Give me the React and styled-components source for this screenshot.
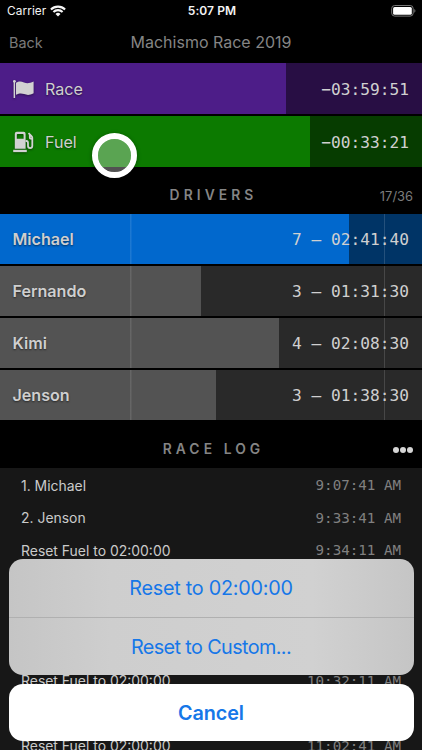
import React from 'react';
import styled, { createGlobalStyle } from 'styled-components';

const GlobalStyle = createGlobalStyle`
    * {
        box-sizing: border-box;
    }

    body {
        margin: 0;
        background: #000;
        overflow: hidden;
        font-family: Inter, Roboto, sans-serif;
    }
`;

const Screen = styled.div`
    position: relative;
    width: 422px;
    height: 750px;
    overflow: hidden;
    background: #000;
`;

//STATUS BAR + NAVIGATION
const StatusBar = styled.div`
    display: grid;
    grid-template-columns: 1fr auto 1fr;
    align-items: center;
    height: 22px;
    padding: 0 6px 0 7px;
    color: #f4f4f4;
    font-size: 11.8px;
    line-height: 22px;
`;

const Carrier = styled.div`
    display: flex;
    align-items: center;
    gap: 4px;
    letter-spacing: 0.1px;
`;

const Clock = styled.div`
    font-weight: 600;
    font-size: 12px;
    letter-spacing: 0.1px;
    margin-right: -1px;
`;

const Battery = styled.svg`
    display: block;
    justify-self: end;
`;

const NavBar = styled.div`
    display: grid;
    grid-template-columns: 1fr auto 1fr;
    align-items: center;
    height: 41px;
    padding: 0 9px;
    color: #858585;
    line-height: 40px;
`;

const BackButton = styled.div`
    font-size: 14.4px;
    color: #7a7a7a;
`;

const Title = styled.div`
    font-size: 16px;
    line-height: 38px;
    padding-bottom: 2px;
`;

//BARS
const BarList = styled.div`
    display: flex;
    flex-direction: column;
    gap: 2px;
`;

const Bar = styled.div`
    display: flex;
    align-items: center;
    justify-content: space-between;
    height: ${props => props.$height || '50px'};
    padding: 0 13px 0 12.5px;
    background:
        ${props => props.$marks ? 'linear-gradient(#ffffff1c, #ffffff1c) 130px 0 / 1.5px 100% no-repeat, linear-gradient(#ffffff24, #ffffff24) 384px 0 / 1px 100% no-repeat,' : ''}
        linear-gradient(${props => props.$fill}, ${props => props.$fill}) 0 0 / ${props => props.$progress}px 100% no-repeat,
        ${props => props.$track};
`;

const BarLabel = styled.div`
    display: flex;
    align-items: center;
    gap: 11.5px;
    color: #cfcfcf;
    font-size: 16.1px;
    font-weight: ${props => props.$bold ? 600 : 400};
    text-shadow: 0 1px 2px #0008;
`;

const BarIcon = styled.svg`
    display: block;
    width: 21px;
    height: 22px;
    fill: #d2d2d2;
    filter: drop-shadow(0 1px 1px #0006);
`;

const Time = styled.div`
    color: #d0d0d0;
    font-family: "DejaVu Sans Mono", monospace;
    font-size: 16.2px;
    white-space: pre;
    padding-top: ${props => props.$drop || 0};
`;

const SectionHeader = styled.div`
    display: grid;
    grid-template-columns: 1fr auto 1fr;
    align-items: center;
    height: ${props => props.$height};
    padding: ${props => props.$padding};
`;

const SectionTitle = styled.div`
    grid-column: 2;
    color: #858585;
    font-size: 13.8px;
    font-weight: 600;
    letter-spacing: 4.1px;
    margin-right: -5px;
`;

const Count = styled.div`
    justify-self: end;
    color: #7c7c7c;
    font-size: 12.9px;
    padding-top: 3px;
`;

const MoreButton = styled.div`
    display: flex;
    justify-self: end;
    gap: 1px;
    padding-top: 1px;
`;

const Dot = styled.span`
    width: 6px;
    height: 6px;
    border-radius: 50%;
    background: #d6d6d6;
`;

//RACE LOG
const Log = styled.div`
    height: 282px;
    padding: 0.9px 21px 0;
    background: #171717;
    overflow: hidden;
`;

const LogRow = styled.div`
    display: flex;
    align-items: center;
    justify-content: space-between;
    height: 32.6px;
    color: #cacaca;
    font-size: 13.95px;
`;

const LogTime = styled.div`
    color: #808080;
    font-family: "DejaVu Sans Mono", monospace;
    font-size: 14.2px;
`;

//OVERLAYS
const ActionSheet = styled.div`
    position: absolute;
    left: 8.5px;
    right: 8.5px;
    bottom: 9px;
    display: flex;
    flex-direction: column;
    gap: 9px;
`;

const ActionGroup = styled.div`
    border-radius: 14px;
    overflow: hidden;
    background: ${props => props.$solid ? '#fff' : 'linear-gradient(90deg, #c5c5c5, #cecece 25%, #d1d1d1 75%, #c5c5c5)'};
`;

const Action = styled.div`
    height: ${props => props.$height || '58px'};
    line-height: 59px;
    color: #1677e8;
    font-size: 19.8px;
    font-weight: ${props => props.$bold ? 600 : 400};
    letter-spacing: ${props => props.$spacing || '-0.1px'};
    text-align: center;

    & + & {
        border-top: 1px solid #b0b0b0;
    }
`;

const Touch = styled.div`
    position: absolute;
    left: 92px;
    top: 132.5px;
    width: 45px;
    height: 45px;
    border: 6.5px solid #fff;
    border-radius: 50%;
    background: #ffffff52;
    background-clip: padding-box;
    box-shadow: 0 1px 4px #0006;
`;

const WifiIcon = () => (
    <svg width="16" height="12" viewBox="0 0 16 12" fill="none" stroke="#f6f6f6" strokeWidth="2.1">
        <path d="M.9 4.5a10.1 10.1 0 0 1 14.2 0" />
        <path d="M3.4 7a6.5 6.5 0 0 1 9.2 0" />
        <path d="M8 11.5 5.5 9a3.6 3.6 0 0 1 5 0z" fill="#f6f6f6" stroke="none" />
    </svg>
);

const BatteryIcon = () => (
    <Battery width="25" height="12" viewBox="0 0 25 12">
        <rect x=".7" y=".5" width="21.5" height="10.6" rx="3" fill="none" stroke="#777" />
        <rect x="2.1" y="2" width="18.7" height="7.7" rx="1.5" fill="#fff" />
        <path d="M23.3 4v3.7c1.5-.5 1.5-3.2 0-3.7z" fill="#777" />
    </Battery>
);

const FlagIcon = () => (
    <BarIcon viewBox="0 0 21 22">
        <circle cx="1.4" cy="3.3" r="1.4" />
        <path d="M.6 3h1.5v17H.6z" />
        <path d="M3 4.7c3.2-1.7 5.2-1.3 8-.2 3.3 1.3 5.8.7 9.6-1v11.8c-3.9 2-6.4 1.9-9.5.8-2.9-1-5-.8-8.1.7z" />
    </BarIcon>
);

const PumpIcon = () => (
    <BarIcon viewBox="0 0 21 22">
        <path fillRule="evenodd" d="M3.8 .8h6.8a2 2 0 0 1 2 2v15H1.8v-15a2 2 0 0 1 2-2zM4.6 3a.8.8 0 0 0-.8.8v3.9h6.8V3.8a.8.8 0 0 0-.8-.8z" />
        <path d="M.2 18.8h13.6v2.3H.2z" />
        <path d="M12.5 10h.9c1.2 0 1.6.8 1.6 2v3.1c0 2.6 4.3 2.6 4.3 0V6.8c0-.8-.4-1.3-1-1.9l-2.8-2.8M16.8 4v2.6c0 .8.9 1.3 2.1 1.3" fill="none" stroke="#d2d2d2" strokeWidth="1.8" />
    </BarIcon>
);

const drivers = [
    { name: 'Michael', time: '7 – 02:41:40', progress: 349, fill: '#0168cd', track: '#003466' },
    { name: 'Fernando', time: '3 – 01:31:30', progress: 201, fill: '#535353', track: '#292929' },
    { name: 'Kimi', time: '4 – 02:08:30', progress: 279, fill: '#535353', track: '#292929' },
    { name: 'Jenson', time: '3 – 01:38:30', progress: 216, fill: '#535353', track: '#292929' },
];

// empty entries keep their row height behind the action sheet
const log = [
    { text: '1. Michael', time: '9:07:41 AM' },
    { text: '2. Jenson', time: '9:33:41 AM' },
    { text: 'Reset Fuel to 02:00:00', time: '9:34:11 AM' },
    {},
    {},
    {},
    { text: 'Reset Fuel to 02:00:00', time: '10:32:11 AM' },
    {},
    { text: 'Reset Fuel to 02:00:00', time: '11:02:41 AM' },
];

class App extends React.Component {

    render() {
        return (
            <Screen>
                <GlobalStyle />
                <StatusBar>
                    <Carrier>Carrier <WifiIcon /></Carrier>
                    <Clock>5:07 PM</Clock>
                    <BatteryIcon />
                </StatusBar>
                <NavBar>
                    <BackButton>Back</BackButton>
                    <Title>Machismo Race 2019</Title>
                </NavBar>
                <BarList>
                    <Bar $height="51px" $progress={286} $fill="#4d1d88" $track="#280e44">
                        <BarLabel><FlagIcon />Race</BarLabel>
                        <Time $drop="2px">−03:59:51</Time>
                    </Bar>
                    <Bar $height="51px" $progress={310} $fill="#0c7a00" $track="#063c00">
                        <BarLabel><PumpIcon />Fuel</BarLabel>
                        <Time $drop="2px">−00:33:21</Time>
                    </Bar>
                </BarList>
                <SectionHeader $height="47px" $padding="8px 9px 0">
                    <SectionTitle>DRIVERS</SectionTitle>
                    <Count>17/36</Count>
                </SectionHeader>
                <BarList>
                    {drivers.map(driver => (
                        <Bar key={driver.name} $marks $progress={driver.progress} $fill={driver.fill} $track={driver.track}>
                            <BarLabel $bold>{driver.name}</BarLabel>
                            <Time>{driver.time}</Time>
                        </Bar>
                    ))}
                </BarList>
                <SectionHeader $height="48px" $padding="10px 9px 0">
                    <SectionTitle>RACE LOG</SectionTitle>
                    <MoreButton><Dot /><Dot /><Dot /></MoreButton>
                </SectionHeader>
                <Log>
                    {log.map((entry, index) => (
                        <LogRow key={index}>
                            <div>{entry.text}</div>
                            <LogTime>{entry.time}</LogTime>
                        </LogRow>
                    ))}
                </Log>
                <Touch />
                <ActionSheet>
                    <ActionGroup>
                        <Action $spacing="-0.25px">Reset to 02:00:00</Action>
                        <Action $spacing="-0.6px">Reset to Custom...</Action>
                    </ActionGroup>
                    <ActionGroup $solid>
                        <Action $bold $height="57px">Cancel</Action>
                    </ActionGroup>
                </ActionSheet>
            </Screen>
        )
    }
}

export default App;
